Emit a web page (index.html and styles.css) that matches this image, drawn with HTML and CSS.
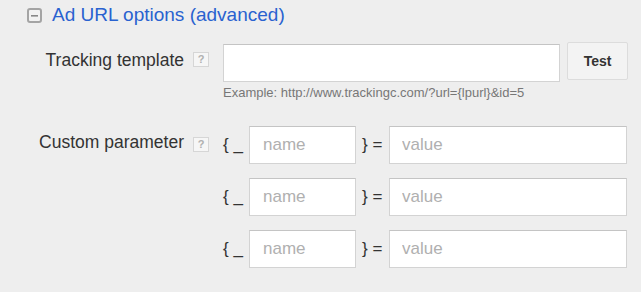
FILE: index.html
```html
<!DOCTYPE html>
<html lang="en">
<head>
  <meta charset="UTF-8" />
  <title>Ad URL options</title>
  <link rel="stylesheet" href="styles.css">
</head>
<body>
  <div class="section-header">
    <svg class="collapse-icon" width="15" height="15" viewBox="0 0 15 15">
      <rect x="1" y="1" width="13" height="13" rx="2" fill="#f2f2f2" stroke="#a4a4a4" stroke-width="2"/>
      <rect x="4" y="7" width="7" height="1.6" fill="#888"/>
    </svg>
    <span class="section-title">Ad URL options (advanced)</span>
  </div>

  <div class="form">
    <div class="row tracking-row">
      <div class="label-cell">
        <span class="label">Tracking template</span>
        <span class="help">?</span>
      </div>
      <div class="field-cell">
        <div class="tracking-line">
          <input class="text-input tracking-input" type="text" />
          <button class="test-btn">Test</button>
        </div>
        <div class="example">Example: http://www.trackingc.com/?url={lpurl}&amp;id=5</div>
      </div>
    </div>

    <div class="row params-row">
      <div class="label-cell">
        <span class="label">Custom parameter</span>
        <span class="help">?</span>
      </div>
      <div class="field-cell params">
        <div class="param">
          <span class="brace-open">{ _</span>
          <input class="text-input name-input" type="text" placeholder="name" />
          <span class="brace-close">} =</span>
          <input class="text-input value-input" type="text" placeholder="value" />
        </div>
        <div class="param">
          <span class="brace-open">{ _</span>
          <input class="text-input name-input" type="text" placeholder="name" />
          <span class="brace-close">} =</span>
          <input class="text-input value-input" type="text" placeholder="value" />
        </div>
        <div class="param">
          <span class="brace-open">{ _</span>
          <input class="text-input name-input" type="text" placeholder="name" />
          <span class="brace-close">} =</span>
          <input class="text-input value-input" type="text" placeholder="value" />
        </div>
      </div>
    </div>
  </div>
</body>
</html>
```

FILE: styles.css
```css
* {
  box-sizing: border-box;
}

body {
  font-family: 'Liberation Sans', Arial, sans-serif;
  background-color: #eeeeee;
  color: #333;
  margin: 0;
  padding: 0;
}

.section-header {
  display: flex;
  align-items: center;
  padding: 4px 0 0 27px;
  height: 26px;
}

.collapse-icon {
  display: block;
  margin-top: 1px;
}

.section-title {
  margin-left: 10px;
  font-size: 19px;
  line-height: 22px;
  color: #2962d0;
}

.form {
  padding-top: 16px;
}

.row {
  display: flex;
  align-items: flex-start;
}

.label-cell {
  width: 209px;
  display: flex;
  justify-content: flex-end;
  align-items: flex-start;
  gap: 9px;
  padding-top: 8px;
}

.label {
  font-size: 17.5px;
  line-height: 20px;
  color: #333;
}

.help {
  width: 16px;
  height: 15px;
  margin-top: 2px;
  background: #f6f6f6;
  border: 1px solid #d6d6d6;
  color: #b0b0b0;
  font-size: 11px;
  font-weight: 700;
  line-height: 13px;
  text-align: center;
}

.field-cell {
  margin-left: 14px;
}

.tracking-line {
  display: flex;
  align-items: flex-start;
  gap: 7px;
}

.text-input {
  font-family: 'Liberation Sans', Arial, sans-serif;
  font-size: 17px;
  color: #333;
  background: #fff;
  border: 1px solid #d3d3d3;
  border-top-color: #c4c4c4;
  border-radius: 0;
  padding: 0 12px;
  outline: none;
  margin: 0;
}

.text-input::placeholder {
  color: #b0b0b0;
}

.tracking-input {
  width: 337px;
  height: 38px;
  margin-top: 2px;
}

.test-btn {
  width: 61px;
  height: 38px;
  font-family: 'Liberation Sans', Arial, sans-serif;
  font-size: 14px;
  font-weight: 700;
  color: #333;
  background: #f3f3f3;
  border: 1px solid #dcdcdc;
  border-radius: 2px;
  padding: 0;
}

.example {
  margin-top: 4px;
  font-size: 13px;
  line-height: 14px;
  color: #777;
}

.params-row {
  margin-top: 26px;
}

.params-row .label-cell {
  padding-top: 6px;
}

.params-row .help {
  margin-top: 5px;
}

.params {
  display: flex;
  flex-direction: column;
  gap: 14px;
}

.param {
  display: flex;
  align-items: center;
}

.brace-open {
  width: 26px;
  font-size: 17px;
  color: #333;
  white-space: pre;
}

.brace-close {
  width: 33px;
  padding-left: 6px;
  font-size: 17px;
  color: #333;
  white-space: pre;
}

.name-input {
  width: 107px;
  height: 38px;
  padding-left: 13px;
}

.value-input {
  width: 238px;
  height: 38px;
}
```
